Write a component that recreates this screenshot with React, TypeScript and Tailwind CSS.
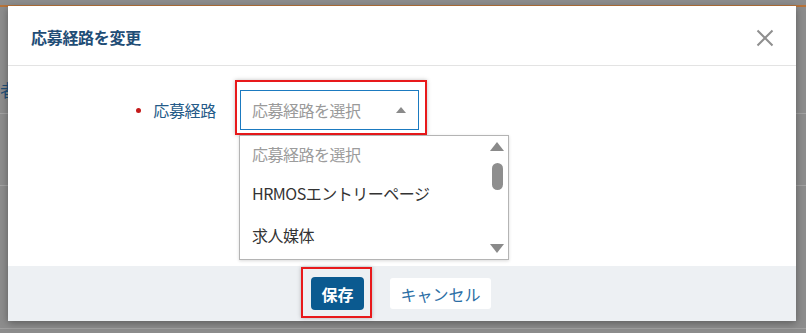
import React from "react";

export default function App() {
  return (
    <div
      className="relative w-[806px] h-[333px] overflow-hidden bg-[#8d8d8d]"
      style={{ fontFamily: '"Noto Sans CJK JP", "Noto Sans", sans-serif' }}
    >
      {/* background page fragments */}
      <div className="absolute left-0 top-[5px] w-full h-[2px] bg-[#b8743a]" />
      <div className="absolute left-0 top-[81px] text-[17px] leading-none text-[#1f4f78]">者</div>
      <div className="absolute left-0 top-[113px] w-full h-px bg-[#a3a3a3]" />
      <div className="absolute left-0 top-[185px] w-full h-px bg-[#a3a3a3]" />
      <div className="absolute left-0 top-[328px] w-full h-px bg-[#a0a0a0]" />

      {/* modal */}
      <div className="absolute left-[8px] top-[6px] w-[788px] h-[315px] bg-white flex flex-col shadow-[0_2px_8px_rgba(0,0,0,0.35)]">
        <div className="h-[60px] flex items-center justify-between pl-[23px] pr-[22px] border-b border-[#e3e3e3]">
          <div className="text-[16px] font-bold text-[#1f4d76] tracking-[-0.3px] pt-[2px]">応募経路を変更</div>
          <svg width="18" height="18" viewBox="0 0 18 18" className="mt-[4px]">
            <path d="M1.5 1.5 L16.5 16.5 M16.5 1.5 L1.5 16.5" stroke="#8f8f8f" strokeWidth="2" />
          </svg>
        </div>

        <div className="flex-1 relative">
          <div className="flex items-center pt-[24px]">
            <div className="w-[232px] flex items-center justify-end pr-[24px]">
              <span className="w-[5px] h-[5px] rounded-full bg-[#c41a1a] mr-[12px]" />
              <span className="text-[16px] text-[#245a88] tracking-[-0.3px]">応募経路</span>
            </div>
            <div className="relative">
              <div className="absolute -left-[5px] -top-[10px] w-[192px] h-[55px] border-2 border-[#e8191b] shadow-[0_0_4px_rgba(0,0,0,0.25)]" />
              <div className="relative w-[179px] h-[40px] border border-[#1b7ac0] flex items-center justify-between pl-[11px] pr-[12px] bg-white">
                <span className="text-[16px] text-[#9a9a9a] tracking-[-0.5px]">応募経路を選択</span>
                <svg width="10" height="6" viewBox="0 0 10 6">
                  <path d="M0 6 L5 0 L10 6 Z" fill="#8a8a8a" />
                </svg>
              </div>
              {/* dropdown list */}
              <div className="absolute left-[-1px] top-[45px] w-[270px] h-[125px] bg-white border border-[#b4b4b4] shadow-[0_1px_3px_rgba(0,0,0,0.15)] flex z-10">
                <div className="flex-1 flex flex-col pl-[12px] pt-[2px] text-[16px] tracking-[-0.5px]">
                  <div className="h-[32px] flex items-center text-[#9c9c9c]">応募経路を選択</div>
                  <div className="h-[46px] flex items-center text-[#333]">HRMOSエントリーページ</div>
                  <div className="h-[38px] flex items-center text-[#333]">求人媒体</div>
                </div>
                <div className="w-[22px] flex flex-col items-center pt-[6px] pb-[6px]">
                  <svg width="14" height="9" viewBox="0 0 14 9">
                    <path d="M0 9 L7 0 L14 9 Z" fill="#8a8a8a" />
                  </svg>
                  <div className="w-[11px] h-[27px] rounded-full bg-[#8e8e8e] mt-[12px]" />
                  <div className="flex-1" />
                  <svg width="14" height="9" viewBox="0 0 14 9">
                    <path d="M0 0 L7 9 L14 0 Z" fill="#8a8a8a" />
                  </svg>
                </div>
              </div>
            </div>
          </div>
        </div>

        <div className="h-[55px] bg-[#edf0f3] flex items-start pt-[11px] pl-[303px]">
          <div className="relative">
            <div className="absolute -left-[10px] -top-[10px] w-[71px] h-[51px] border-2 border-[#e8191b] shadow-[0_0_4px_rgba(0,0,0,0.25)]" />
            <button className="relative w-[53px] h-[33px] rounded-[4px] bg-[#0b5a90] text-white text-[16px] font-bold">
              保存
            </button>
          </div>
          <button className="ml-[26px] mt-[1px] w-[101px] h-[31px] rounded-[3px] bg-white text-[#2b6ea5] text-[16px]">
            キャンセル
          </button>
        </div>
      </div>
    </div>
  );
}
